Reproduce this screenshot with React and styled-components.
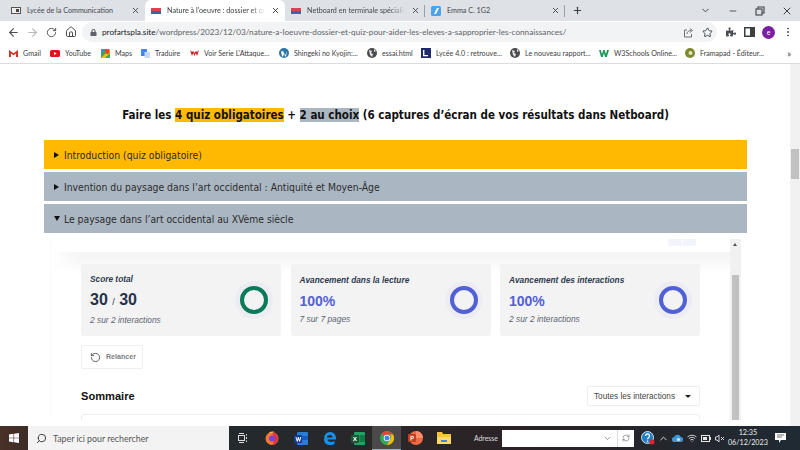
import React from 'react';
import styled, { createGlobalStyle } from 'styled-components';
import { ArrowLeft, ArrowRight, RotateCw, Home, Star, MoreVertical, X, Plus, ChevronDown, ChevronUp, Minus, RotateCcw, Search, Wifi, RefreshCw } from 'lucide-react';
import { FaLock, FaPuzzlePiece } from 'react-icons/fa';

const GlobalStyle = createGlobalStyle`
  html, body { margin: 0; padding: 0; background: #fff; }
  * { box-sizing: border-box; }
  svg { flex: none; }
`;

const Screen = styled.div`
  width: 800px;
  height: 450px;
  display: flex;
  flex-direction: column;
  overflow: hidden;
  font-family: Lato, "Liberation Sans", sans-serif;
`;

/* browser chrome */
const TabStrip = styled.div`
  height: 21px;
  flex: none;
  background: #dee1e6;
  display: flex;
  align-items: stretch;
  padding-left: 5px;
`;

const Tab = styled.div`
  width: 140px;
  display: flex;
  align-items: center;
  padding: 0 5px 0 6px;
  gap: 6px;
  background: ${(p) => (p.$active ? '#fff' : 'transparent')};
  border-radius: ${(p) => (p.$active ? '6px 6px 0 0' : '0')};
  color: ${(p) => (p.$active ? '#3c4043' : '#45494e')};
`;

const TabTitle = styled.span`
  flex: 1;
  min-width: 0;
  font-size: 7.2px;
  white-space: nowrap;
  overflow: hidden;
  mask-image: ${(p) => (p.$fade ? 'linear-gradient(90deg, #000 85%, transparent)' : 'none')};
`;

const TabDivider = styled.i`
  width: 1px;
  height: 12px;
  align-self: center;
  background: #9aa0a6;
  margin-left: -1px;
`;

const NewTab = styled.div`
  display: flex;
  align-items: center;
  margin-left: 7px;
  color: #3c4043;
`;

const WindowControls = styled.div`
  margin-left: auto;
  display: flex;
  align-items: center;
  color: #3c4043;
`;

const WindowButton = styled.div`
  width: 27px;
  display: flex;
  justify-content: center;
  align-items: center;
`;

const Toolbar = styled.div`
  height: 22px;
  flex: none;
  display: flex;
  align-items: center;
  background: #fff;
  padding-left: 4px;
`;

const NavButton = styled.div`
  width: 19px;
  display: flex;
  justify-content: center;
  color: ${(p) => (p.$disabled ? '#b4b7bb' : '#494c50')};
`;

const Omnibox = styled.div`
  width: 635px;
  height: 20px;
  margin: 0 4px 0 2px;
  border-radius: 10px;
  background: #f1f3f4;
  display: flex;
  align-items: center;
  padding: 0 0 0 8px;
  color: #5f6368;
`;

const Url = styled.span`
  flex: 1;
  margin-left: 5px;
  font-size: 8.2px;
  white-space: nowrap;
  color: #5f6368;
  b { font-weight: 400; color: #202124; }
`;

const ToolButton = styled.div`
  width: 19px;
  display: flex;
  justify-content: center;
  align-items: center;
  color: #494c50;
`;

const Avatar = styled.div`
  width: 13px;
  height: 13px;
  border-radius: 50%;
  background: #7b1fa2;
  color: #fff;
  font-size: 7px;
  line-height: 12px;
  text-align: center;
`;

const BookmarkBar = styled.div`
  height: 21px;
  flex: none;
  display: flex;
  align-items: center;
  padding-left: 9px;
  gap: 10px;
  background: #fff;
  border-bottom: 1px solid #dadce0;
`;

const Bookmark = styled.div`
  display: flex;
  align-items: center;
  gap: 5px;
  font-size: 7.1px;
  color: #3c4043;
  width: ${(p) => p.$w}px;
  white-space: nowrap;
`;

const MoreBookmarks = styled.span`
  margin-left: auto;
  margin-right: 9px;
  font-size: 9px;
  color: #3c4043;
`;

/* page */
const Viewport = styled.div`
  flex: 1;
  min-height: 0;
  display: flex;
  background: #fff;
`;

const Page = styled.main`
  width: 790px;
  padding: 44px 43px 0 44px;
  overflow: hidden;
  font-family: "DejaVu Sans Condensed", "DejaVu Sans", Verdana, sans-serif;
  font-stretch: condensed;
`;

const Heading = styled.h2`
  margin: 0 0 17px;
  height: 15px;
  font-size: 11.5px;
  line-height: 15px;
  font-weight: 700;
  text-align: center;
  color: #111;
  white-space: nowrap;
`;

const Mark = styled.span`
  background: ${(p) => p.$color};
`;

const Accordion = styled.div`
  display: flex;
  flex-direction: column;
  gap: 3px;
`;

const AccordionHead = styled.div`
  height: 29px;
  display: flex;
  align-items: center;
  gap: 5px;
  padding-left: 10px;
  font-size: 10.3px;
  color: #2c2c2c;
  background: ${(p) => p.$color};
`;

const Caret = styled.i`
  width: 0;
  height: 0;
  ${(p) =>
    p.$open
      ? 'margin-right: -1px; border-left: 3px solid transparent; border-right: 3px solid transparent; border-top: 5px solid #111;'
      : 'border-top: 3px solid transparent; border-bottom: 3px solid transparent; border-left: 5px solid #111;'}
`;

const FramePanel = styled.div`
  display: flex;
  height: 181px;
  margin: 6px 6px 0 6px;
  overflow: hidden;
`;

const Frame = styled.div`
  flex: 1;
  min-width: 0;
  border-left: 1px solid #fafafa;
  font-family: "Liberation Sans", Arial, sans-serif;
  font-stretch: normal;
`;

const FrameTop = styled.div`
  height: 13px;
  display: flex;
  justify-content: flex-end;
  gap: 1px;
  padding-right: 34px;
`;

const Ghost = styled.i`
  width: 13.5px;
  height: 7px;
  background: #f3f4fb;
`;

const FrameBody = styled.div`
  padding: 12px 30px 0 30px;
  height: 168px;
  background:
    linear-gradient(90deg, #fff, rgba(255, 255, 255, 0) 30px),
    linear-gradient(#f3f3f3, #fff 22px);
`;

const Cards = styled.div`
  display: grid;
  grid-template-columns: repeat(3, 200px);
  gap: 9.5px;
`;

const Card = styled.div`
  height: 72px;
  padding: 10px 7px 10px 9px;
  background: #f3f3f4;
  border-radius: 3px;
  display: flex;
  align-items: center;
  justify-content: space-between;
`;

const CardText = styled.div`
  display: flex;
  flex-direction: column;
  padding-bottom: 2px;
`;

const CardTitle = styled.div`
  font-size: 8.3px;
  line-height: 10px;
  font-style: italic;
  font-weight: 700;
  color: #2e3a4d;
`;

const CardValue = styled.div`
  margin-top: 6px;
  font-size: ${(p) => (p.$blue ? '14px' : '16px')};
  line-height: 20px;
  font-weight: 700;
  color: ${(p) => (p.$blue ? '#5460d4' : '#27324a')};
  small { font-size: 9px; font-weight: 400; }
`;

const CardNote = styled.div`
  margin-top: 3px;
  font-size: 8.4px;
  line-height: 10px;
  font-style: italic;
  color: #5b6470;
`;

const Ring = styled.div`
  width: 28px;
  height: 28px;
  margin: 5px 6px 5px 5px;
  border-radius: 50%;
  border: 4px solid ${(p) => p.$color};
  box-shadow: 0 0 0 5px #ecedf3;
  background: #f3f3f4;
`;

const RestartButton = styled.div`
  display: inline-flex;
  align-items: center;
  gap: 5px;
  margin-top: 9px;
  width: 62px;
  height: 24px;
  padding-left: 8px;
  border: 1px solid #eeeeee;
  border-radius: 2px;
  background: #fff;
  font-size: 7.1px;
  font-weight: 700;
  color: #7b7f84;
  svg { color: #555; }
`;

const SummaryRow = styled.div`
  display: flex;
  align-items: center;
  justify-content: space-between;
  margin-top: 17px;
`;

const SummaryTitle = styled.div`
  font-size: 11.1px;
  font-weight: 700;
  color: #111;
`;

const Select = styled.div`
  width: 113px;
  height: 20px;
  display: flex;
  align-items: center;
  justify-content: space-between;
  padding: 0 6px;
  border: 1px solid #eee;
  border-radius: 2px;
  background: #fff;
  font-size: 8.2px;
  color: #444;
`;

const SelectArrow = styled.i`
  width: 0;
  height: 0;
  margin-right: 2px;
  border-left: 3px solid transparent;
  border-right: 3px solid transparent;
  border-top: 3px solid #222;
`;

const SummaryBox = styled.div`
  height: 20px;
  margin-top: 8px;
  border: 1px solid #eee;
  border-radius: 3px 3px 0 0;
  background: #fff;
`;

const Scrollbar = styled.div`
  width: ${(p) => (p.$page ? 10 : 11)}px;
  flex: none;
  background: #f1f1f1;
  position: relative;
  padding-top: ${(p) => p.$top}px;
`;

const ScrollThumb = styled.div`
  width: ${(p) => (p.$page ? 8 : 7)}px;
  height: ${(p) => p.$h}px;
  margin: 0 auto;
  background: #c1c1c1;
`;

const ScrollArrow = styled.i`
  position: absolute;
  top: 4px;
  left: 3px;
  width: 0;
  height: 0;
  border-left: 2.5px solid transparent;
  border-right: 2.5px solid transparent;
  border-bottom: 3px solid #505050;
`;

/* windows taskbar */
const Taskbar = styled.footer`
  height: 24px;
  flex: none;
  display: flex;
  align-items: stretch;
  background: linear-gradient(90deg, #4a3128 0, #3c2c28 28px, #232a2e 230px, #2c2527 420px, #2a2226 520px, #1f2a33 800px);
  color: #fff;
`;

const StartButton = styled.div`
  width: 28px;
  display: flex;
  align-items: center;
  justify-content: center;
`;

const SearchBox = styled.div`
  width: 201px;
  display: flex;
  align-items: center;
  gap: 6px;
  padding-left: 8px;
  background: #f3f3f3;
  color: #555;
  font-size: 8.8px;
  svg { color: #333; transform: scaleX(-1); }
`;

const TaskIcon = styled.div`
  width: 28.7px;
  display: flex;
  align-items: center;
  justify-content: center;
  background: ${(p) => (p.$running ? 'rgba(255,255,255,0.16)' : 'transparent')};
  border-bottom: ${(p) => (p.$running ? '1px solid #76b9ed' : '0')};
`;

const AddressLabel = styled.span`
  width: 25px;
  margin-left: 15.4px;
  align-self: center;
  font-size: 6.9px;
  white-space: nowrap;
  color: #ddd;
`;

const AddressField = styled.div`
  width: 132px;
  height: 17px;
  margin-left: 3px;
  align-self: center;
  background: #fff;
  display: flex;
  align-items: center;
  justify-content: flex-end;
  color: #777;
`;

const AddressGo = styled.div`
  width: 17px;
  height: 100%;
  margin-left: 5px;
  border-left: 1px solid #ddd;
  display: flex;
  align-items: center;
  justify-content: center;
`;

const Tray = styled.div`
  display: flex;
  align-items: center;
  margin-left: 7px;
  flex: 1;
  color: #e8e8e8;
`;

const TrayIcon = styled.div`
  width: 14px;
  margin-left: ${(p) => p.$gap || 0}px;
  display: flex;
  justify-content: center;
`;

const Clock = styled.div`
  width: 40px;
  margin-left: 1px;
  text-align: center;
  font-size: 7.2px;
  line-height: 10px;
  color: #eee;
`;

const Notify = styled.div`
  margin-left: 7.5px;
  display: flex;
  color: #fff;
`;

/* small drawings */
const NetboardIcon = () => (
  <svg width="10" height="6" viewBox="0 0 10 6">
    <rect width="10" height="3" fill="#d8434f" />
    <rect y="3" width="10" height="3" fill="#3f62a8" />
  </svg>
);

const ScreenIcon = () => (
  <svg width="10" height="8" viewBox="0 0 10 8">
    <rect x=".5" y=".5" width="9" height="6" fill="#eee" stroke="#555" />
    <rect x="5" y="2" width="3" height="3" fill="#444" />
  </svg>
);

const EmmaIcon = () => (
  <svg width="10" height="10" viewBox="0 0 10 10">
    <rect width="10" height="10" rx="1.5" fill="#4da3ea" />
    <path d="M3 8L6 2h2L5 8z" fill="#fff" />
  </svg>
);

const ShareIcon = () => (
  <svg width="11" height="11" viewBox="0 0 11 11" fill="none" stroke="#5f6368" strokeWidth="0.9">
    <path d="M4 3H1.5v7h7V7" />
    <path d="M4 7c0-2.5 2-3.5 4-3.5M6.8 1.5L9.5 3.5 6.8 5.5" />
  </svg>
);

const SidePanelIcon = () => (
  <svg width="11" height="10" viewBox="0 0 11 10">
    <rect x=".75" y=".75" width="9.5" height="8.5" fill="none" stroke="#3c4043" strokeWidth="1.5" />
    <rect x="6" y="1" width="4" height="8" fill="#3c4043" />
  </svg>
);

const RestoreIcon = () => (
  <svg width="10" height="10" viewBox="0 0 10 10" fill="none" stroke="#3c4043" strokeWidth="1.1">
    <rect x="1" y="3" width="6" height="6" />
    <path d="M3 3V1h6v6H7" />
  </svg>
);

const GmailIcon = () => (
  <svg width="9" height="7" viewBox="0 0 9 7">
    <path d="M0 0l4.5 3.2L9 0v7H7V3.5L4.5 5.2 2 3.5V7H0z" fill="#d93025" />
  </svg>
);

const YoutubeIcon = () => (
  <svg width="10" height="7" viewBox="0 0 10 7">
    <rect width="10" height="7" rx="1.6" fill="#e3121b" />
    <path d="M4 2l2.6 1.5L4 5z" fill="#fff" />
  </svg>
);

const MapsIcon = () => (
  <svg width="9" height="9" viewBox="0 0 9 9">
    <rect width="9" height="9" rx="1" fill="#34a853" />
    <path d="M0 9L9 0v4L4 9z" fill="#fbbc04" />
    <circle cx="6.2" cy="2.8" r="2.3" fill="#ea4335" />
    <path d="M0 0h4L0 4z" fill="#4285f4" />
  </svg>
);

const TranslateIcon = () => (
  <svg width="9" height="9" viewBox="0 0 9 9">
    <rect width="6" height="7" rx=".6" fill="#4285f4" />
    <rect x="3.5" y="3" width="5.5" height="6" rx=".6" fill="#c6d9f7" />
  </svg>
);

const RedIcon = () => (
  <svg width="9" height="9" viewBox="0 0 9 9">
    <path d="M0 1l2 6 1.2-3 1.3 3 1.3-3L7 7l2-6-2 2-1-1-1.5 2L3 2 2 3z" fill="#cf2020" />
  </svg>
);

const WordpressIcon = () => (
  <svg width="10" height="10" viewBox="0 0 10 10">
    <circle cx="5" cy="5" r="5" fill="#2f76a8" />
    <path d="M2 3.2h2.2L6 7.6 7.8 3.2 7 8.4H6L5 6 4 8.4H3z" fill="#fff" />
  </svg>
);

const GlobeIcon = () => (
  <svg width="10" height="10" viewBox="0 0 10 10">
    <circle cx="5" cy="5" r="5" fill="#4a4d50" />
    <path d="M2 2l3 1-1 2 2 1-1 3-2-2zM7 1l2 2-2 1z" fill="#e4e4e4" />
  </svg>
);

const LyceeIcon = () => (
  <svg width="10" height="10" viewBox="0 0 10 10">
    <rect width="10" height="10" fill="#1f2a6b" />
    <path d="M2 2h1.4v5H7v1.2H2z" fill="#fff" />
  </svg>
);

const W3Icon = () => (
  <svg width="10" height="8" viewBox="0 0 10 8">
    <path d="M0 1h1.8L3 5l1.2-4h1.4L7 5l1-4h2L7.8 8H6L4.9 4 3.8 8H2z" fill="#1b9a5a" />
  </svg>
);

const FramaIcon = () => (
  <svg width="10" height="10" viewBox="0 0 10 10">
    <circle cx="5" cy="5" r="5" fill="#7c8a2c" />
    <circle cx="5.5" cy="5" r="2" fill="#e4e8c0" />
  </svg>
);

const WindowsIcon = () => (
  <svg width="10" height="10" viewBox="0 0 10 10" fill="#fff">
    <path d="M0 1.4l4.5-.6v3.900H0zM5.100.7L10 0v4.700H5.100zM0 5.300h4.500v3.900L0 8.600zM5.100 5.300H10V10l-4.900-.7z" />
  </svg>
);

const TaskViewIcon = () => (
  <svg width="10" height="10" viewBox="0 0 10 10" fill="none" stroke="#ddd" strokeWidth="1">
    <rect x=".5" y="2.5" width="6" height="5" />
    <path d="M1 .5h5M1 9.500h5M8.500 1v1.500M8.500 4v2M8.500 7.500V9" />
  </svg>
);

const FirefoxIcon = () => (
  <svg width="14" height="14" viewBox="0 0 14 14">
    <circle cx="7" cy="7.5" r="6.5" fill="#f9792c" />
    <path d="M7 1c3 .5 6 3 6 6.500S10 13.800 7 14C9 12 10 9 7 1z" fill="#e3303e" />
    <circle cx="7" cy="7.5" r="3" fill="#7542e5" />
    <path d="M4 1.500C6 .5 8 .3 9 1 7.500 2 5.500 2.500 4 1.500z" fill="#ffbd4f" />
  </svg>
);

const WordIcon = () => (
  <svg width="14" height="13" viewBox="0 0 14 13">
    <rect x="3" width="11" height="13" rx="1" fill="#2b7cd3" />
    <rect x="8" y="4" width="6" height="4" fill="#185abd" />
    <rect y="3" width="8" height="8" rx="1" fill="#103f91" />
    <path d="M1.500 5h1l.6 3 .9-3h.8l.9 3 .6-3h1L6 9.500H5L4.400 7 3.800 9.500h-1z" fill="#fff" />
  </svg>
);

const EdgeIcon = () => (
  <svg width="13" height="13" viewBox="0 0 13 13">
    <path d="M1 6C1.500 2 4.500 0 7 0c3.500 0 6 2.500 6 6.500v1H4.500c.2 2 3.500 3.500 7 1.500v3c-5 2.500-11 .5-10.500-5C2 4.500 3.500 3.500 5 3.500 4 4 4 5 4 5.500h5.500C9.500 3 7 1.500 1 6z" fill="#1a8fe3" />
  </svg>
);

const ExcelIcon = () => (
  <svg width="14" height="13" viewBox="0 0 14 13">
    <rect x="3" width="11" height="13" rx="1" fill="#21a366" />
    <rect x="8.5" y="3" width="5.5" height="7" fill="#107c41" />
    <rect y="3" width="8" height="8" rx="1" fill="#185c37" />
    <path d="M2 5h1.200L4 6.500 4.800 5H6L4.700 7 6 9H4.800L4 7.500 3.200 9H2l1.300-2z" fill="#fff" />
  </svg>
);

const ChromeIcon = () => (
  <svg width="14" height="14" viewBox="0 0 14 14">
    <circle cx="7" cy="7" r="7" fill="#34a853" />
    <path d="M7 0a7 7 0 0 1 6.100 3.500H7A3.500 3.500 0 0 0 3.900 5.400L1.900 2.200A7 7 0 0 1 7 0z" fill="#ea4335" />
    <path d="M13.100 3.500A7 7 0 0 1 7 14l3-5.200a3.500 3.500 0 0 0 0-5.300z" fill="#fbbc04" />
    <circle cx="7" cy="7" r="3.3" fill="#fff" />
    <circle cx="7" cy="7" r="2.5" fill="#4285f4" />
  </svg>
);

const PowerPointIcon = () => (
  <svg width="15" height="14" viewBox="0 0 15 14">
    <circle cx="8" cy="7" r="7" fill="#ed6c47" />
    <path d="M8 0a7 7 0 0 1 7 7H8z" fill="#ff8f6b" />
    <rect y="3" width="8" height="8" rx="1" fill="#c43e1c" />
    <path d="M2.500 5h2a1.400 1.400 0 0 1 0 2.800h-1V9.500h-1zM3.500 5.800v1.200h.8a.6.6 0 0 0 0-1.200z" fill="#fff" />
  </svg>
);

const FolderIcon = () => (
  <svg width="14" height="12" viewBox="0 0 14 12">
    <path d="M0 0h5l1 2h8v10H0z" fill="#f5c242" />
    <rect x="0" y="5" width="14" height="7" fill="#ffd966" />
    <rect x="4" y="8" width="6" height="2" fill="#3a8dde" />
  </svg>
);

const HelpIcon = () => (
  <svg width="14" height="14" viewBox="0 0 14 14">
    <circle cx="6.5" cy="6.5" r="6" fill="#1f7fc4" stroke="#fff" strokeWidth=".8" />
    <path d="M4.500 5a2 2 0 1 1 3 1.700c-.6.400-1 .7-1 1.600" fill="none" stroke="#fff" strokeWidth="1.3" />
    <circle cx="6.5" cy="10.3" r=".8" fill="#fff" />
    <circle cx="11" cy="11" r="2.5" fill="#e3202c" />
  </svg>
);

const CloudIcon = () => (
  <svg width="11" height="8" viewBox="0 0 11 8">
    <path d="M2.500 8a2.500 2.500 0 0 1-.3-5A3.500 3.500 0 0 1 8.800 3 2.500 2.500 0 0 1 8.500 8z" fill="#3a96dd" />
    <circle cx="6.5" cy="5.5" r="1.6" fill="#dfe9f2" />
  </svg>
);

const BatteryIcon = () => (
  <svg width="10" height="7" viewBox="0 0 10 7">
    <rect x=".5" y=".5" width="8" height="6" fill="none" stroke="#e8e8e8" />
    <rect x="2" y="2" width="4" height="3" fill="#e8e8e8" />
    <rect x="9" y="2" width="1" height="3" fill="#e8e8e8" />
  </svg>
);

const MutedIcon = () => (
  <svg width="10" height="9" viewBox="0 0 10 9" fill="none" stroke="#e8e8e8" strokeWidth=".9">
    <path d="M.5 3h1.500l2-2v7l-2-2H.5zM6 3l3 3M9 3L6 6" />
  </svg>
);

const NotifyIcon = () => (
  <svg width="11" height="10" viewBox="0 0 11 10">
    <path d="M0 0h11v7H6L4 10V7H0z" fill="#fff" />
    <path d="M2 2h7M2 4h5" stroke="#333" strokeWidth=".7" />
  </svg>
);

const tabs = [
  { title: 'Lycée de la Communication', icon: <ScreenIcon /> },
  { title: "Nature à l'oeuvre : dossier et qu", icon: <NetboardIcon />, active: true, fade: true },
  { title: 'Netboard en terminale spécialité', icon: <NetboardIcon />, divided: true, fade: true },
  { title: 'Emma C. 1G2', icon: <EmmaIcon />, divided: true },
];

const bookmarks = [
  { label: 'Gmail', icon: <GmailIcon />, w: 31 },
  { label: 'YouTube', icon: <YoutubeIcon />, w: 41 },
  { label: 'Maps', icon: <MapsIcon />, w: 30 },
  { label: 'Traduire', icon: <TranslateIcon />, w: 39 },
  { label: "Voir Serie L'Attaque...", icon: <RedIcon />, w: 79 },
  { label: 'Shingeki no Kyojin:...', icon: <WordpressIcon />, w: 78 },
  { label: 'essai.html', icon: <GlobeIcon />, w: 44 },
  { label: 'Lycée 4.0 : retrouve...', icon: <LyceeIcon />, w: 79 },
  { label: 'Le nouveau rapport...', icon: <GlobeIcon />, w: 79 },
  { label: 'W3Schools Online...', icon: <W3Icon />, w: 76 },
  { label: 'Framapad - Éditeur...', icon: <FramaIcon />, w: 78 },
];

const stats = [
  { title: 'Score total', note: '2 sur 2 interactions', ring: '#0b7a5a', score: true },
  { title: 'Avancement dans la lecture', note: '7 sur 7 pages', ring: '#5160d6' },
  { title: 'Avancement des interactions', note: '2 sur 2 interactions', ring: '#5160d6' },
];

const App = () => (
  <Screen>
    <GlobalStyle />
    <TabStrip>
      {tabs.map((tab) => (
        <React.Fragment key={tab.title}>
          <Tab $active={tab.active}>
            {tab.icon}
            <TabTitle $fade={tab.fade}>{tab.title}</TabTitle>
            <X size={9} strokeWidth={2.5} />
          </Tab>
          {tab.divided && <TabDivider />}
        </React.Fragment>
      ))}
      <NewTab>
        <Plus size={11} strokeWidth={2.5} />
      </NewTab>
      <WindowControls>
        <WindowButton><ChevronDown size={11} /></WindowButton>
        <WindowButton><Minus size={10} /></WindowButton>
        <WindowButton><RestoreIcon /></WindowButton>
        <WindowButton><X size={12} /></WindowButton>
      </WindowControls>
    </TabStrip>

    <Toolbar>
      <NavButton><ArrowLeft size={13} /></NavButton>
      <NavButton $disabled><ArrowRight size={13} /></NavButton>
      <NavButton><RotateCw size={11} /></NavButton>
      <NavButton><Home size={12} /></NavButton>
      <Omnibox>
        <FaLock size={7} />
        <Url><b>profartspla.site</b>/wordpress/2023/12/03/nature-a-loeuvre-dossier-et-quiz-pour-aider-les-eleves-a-sapproprier-les-connaissances/</Url>
        <ToolButton><ShareIcon /></ToolButton>
        <ToolButton><Star size={11} color="#3c4043" /></ToolButton>
      </Omnibox>
      <ToolButton><FaPuzzlePiece size={10} /></ToolButton>
      <ToolButton><SidePanelIcon /></ToolButton>
      <ToolButton><Avatar>e</Avatar></ToolButton>
      <ToolButton><MoreVertical size={12} /></ToolButton>
    </Toolbar>

    <BookmarkBar>
      {bookmarks.map((b) => (
        <Bookmark key={b.label} $w={b.w}>
          {b.icon}
          <span>{b.label}</span>
        </Bookmark>
      ))}
      <MoreBookmarks>»</MoreBookmarks>
    </BookmarkBar>

    <Viewport>
      <Page>
        <Heading>
          Faire les <Mark $color="#ffb900">4 quiz obligatoires</Mark> + <Mark $color="#aab6c2">2 au choix</Mark> (6 captures d’écran de vos résultats dans Netboard)
        </Heading>
        <Accordion>
          <AccordionHead $color="#ffb900"><Caret />Introduction (quiz obligatoire)</AccordionHead>
          <AccordionHead $color="#aab6c2"><Caret />Invention du paysage dans l’art occidental : Antiquité et Moyen-Âge</AccordionHead>
          <AccordionHead $color="#aab6c2"><Caret $open />Le paysage dans l’art occidental au XVème siècle</AccordionHead>
        </Accordion>
        <FramePanel>
          <Frame>
            <FrameTop><Ghost /><Ghost /></FrameTop>
            <FrameBody>
              <Cards>
                {stats.map((s) => (
                  <Card key={s.title}>
                    <CardText>
                      <CardTitle>{s.title}</CardTitle>
                      {s.score
                        ? <CardValue>30 <small>/</small> 30</CardValue>
                        : <CardValue $blue>100%</CardValue>}
                      <CardNote>{s.note}</CardNote>
                    </CardText>
                    <Ring $color={s.ring} />
                  </Card>
                ))}
              </Cards>
              <RestartButton><RotateCcw size={11} />Relancer</RestartButton>
              <SummaryRow>
                <SummaryTitle>Sommaire</SummaryTitle>
                <Select>Toutes les interactions<SelectArrow /></Select>
              </SummaryRow>
              <SummaryBox />
            </FrameBody>
          </Frame>
          <Scrollbar $top={36}>
            <ScrollArrow />
            <ScrollThumb $h={151} />
          </Scrollbar>
        </FramePanel>
      </Page>
      <Scrollbar $page $top={85}>
        <ScrollThumb $page $h={30} />
      </Scrollbar>
    </Viewport>

    <Taskbar>
      <StartButton><WindowsIcon /></StartButton>
      <SearchBox><Search size={11} />Taper ici pour rechercher</SearchBox>
      <TaskIcon><TaskViewIcon /></TaskIcon>
      <TaskIcon><FirefoxIcon /></TaskIcon>
      <TaskIcon><WordIcon /></TaskIcon>
      <TaskIcon><EdgeIcon /></TaskIcon>
      <TaskIcon><ExcelIcon /></TaskIcon>
      <TaskIcon $running><ChromeIcon /></TaskIcon>
      <TaskIcon><PowerPointIcon /></TaskIcon>
      <TaskIcon><FolderIcon /></TaskIcon>
      <AddressLabel>Adresse</AddressLabel>
      <AddressField>
        <ChevronDown size={9} />
        <AddressGo><RefreshCw size={8} /></AddressGo>
      </AddressField>
      <Tray>
        <TrayIcon><HelpIcon /></TrayIcon>
        <TrayIcon $gap={2}><ChevronUp size={11} /></TrayIcon>
        <TrayIcon><CloudIcon /></TrayIcon>
        <TrayIcon><Wifi size={10} /></TrayIcon>
        <TrayIcon><BatteryIcon /></TrayIcon>
        <TrayIcon><MutedIcon /></TrayIcon>
        <Clock>12:35<br />06/12/2023</Clock>
        <Notify><NotifyIcon /></Notify>
      </Tray>
    </Taskbar>
  </Screen>
);

export default App;
